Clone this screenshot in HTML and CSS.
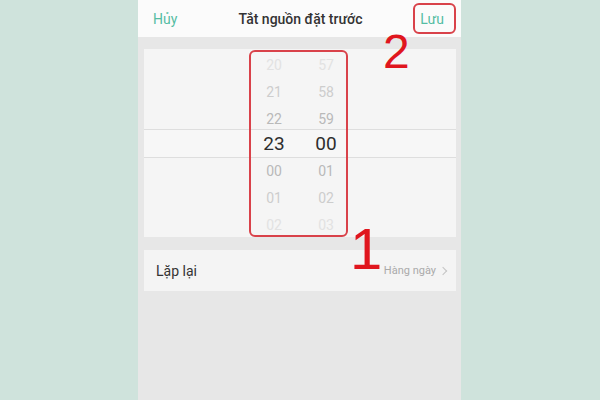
FILE: index.html
```html
<!DOCTYPE html>
<html lang="vi">

<head>
  <meta charset="UTF-8">
  <title>Tắt nguồn đặt trước</title>
  <link rel="stylesheet" href="styles.css">
</head>

<body>
  <div class="phone">
    <div class="top-bar">
      <span class="btn-cancel">Hủy</span>
      <h2 class="top-tit">Tắt nguồn đặt trước</h2>
      <span class="btn-save">Lưu</span>
      <span class="mark mark-save"></span>
      <span class="num num-2">2</span>
    </div>

    <div class="picker">
      <div class="row r3"><span>20</span><span>57</span></div>
      <div class="row r2"><span>21</span><span>58</span></div>
      <div class="row r1"><span>22</span><span>59</span></div>
      <div class="row cur"><span>23</span><span>00</span></div>
      <div class="row r1"><span>00</span><span>01</span></div>
      <div class="row r2"><span>01</span><span>02</span></div>
      <div class="row r3"><span>02</span><span>03</span></div>
      <span class="mark mark-picker"></span>
    </div>

    <div class="item">
      <span class="item-name">Lặp lại</span>
      <span class="item-val">Hàng ngày <i class="arrow"></i></span>
      <span class="num num-1">1</span>
    </div>
  </div>
</body>

</html>
```

FILE: styles.css
```css
body,
h2 {
  margin: 0;
}

body {
  background-color: #cfe3dc;
  font-family: Roboto, "Noto Sans", sans-serif;
  height: 400px;
  overflow: hidden;
}

.phone {
  width: 323px;
  height: 400px;
  margin-left: 138px;
  background-color: #e7e7e7;
  padding: 0 5px 0 6px;
  box-sizing: border-box;
}

/* 顶部栏 */
.top-bar {
  position: relative;
  height: 37px;
  margin: 0 -5px 0 -6px;
  padding: 0 17px 0 15px;
  background-color: #fbfbfb;
  display: flex;
  align-items: center;
  justify-content: space-between;
}

.btn-cancel,
.btn-save {
  color: #55bda3;
  font-size: 14px;
  width: 36px;
}

.btn-save {
  text-align: right;
}

.top-tit {
  font-size: 14px;
  font-weight: 500;
  color: #333;
  margin-left: 4px;
}

/* 时间选择 */
.picker {
  position: relative;
  margin-top: 12px;
  height: 188px;
  padding-top: 2px;
  box-sizing: border-box;
  background-color: #f5f5f5;
  overflow: hidden;
}

.row {
  height: 27px;
  display: flex;
  justify-content: center;
  align-items: center;
  font-size: 14px;
}

.row span {
  width: 52px;
  text-align: center;
}

.r1 {
  color: #b9b9b9;
}

.r2 {
  color: #cdcdcd;
}

.r3 {
  color: #e2e2e2;
}

.cur {
  color: #2e2e2e;
  font-size: 19px;
  border-top: 1px solid #dedede;
  border-bottom: 1px solid #dedede;
  height: 27px;
  margin-top: -3px;
  margin-bottom: -1px;
  background-color: #f7f7f7;
}

/* 重复 */
.item {
  position: relative;
  margin-top: 13px;
  height: 41px;
  padding: 0 10px 0 12px;
  background-color: #f4f4f4;
  display: flex;
  align-items: center;
  justify-content: space-between;
}

.item-name {
  font-size: 14px;
  color: #333;
}

.item-val {
  font-size: 11px;
  color: #aaa;
  display: flex;
  align-items: center;
}

.arrow {
  width: 5px;
  height: 5px;
  border-top: 1px solid #c4c4c4;
  border-right: 1px solid #c4c4c4;
  transform: rotate(45deg);
  margin-left: 4px;
}

/* 红色标注 */
.mark {
  position: absolute;
  border: 2px solid #d9424a;
  border-radius: 6px;
  box-sizing: border-box;
}

.mark-save {
  left: 275px;
  top: 3px;
  width: 43px;
  height: 31px;
}

.mark-picker {
  left: 105px;
  top: 1px;
  width: 99px;
  height: 187px;
}

.num {
  position: absolute;
  z-index: 2;
  color: #e0161e;
  font-family: "Liberation Sans", Arial, sans-serif;
  line-height: 1;
}

.num-2 {
  font-size: 48px;
  left: 245px;
  top: 28px;
}

.num-1 {
  font-size: 58px;
  left: 206px;
  top: -30px;
}
```
